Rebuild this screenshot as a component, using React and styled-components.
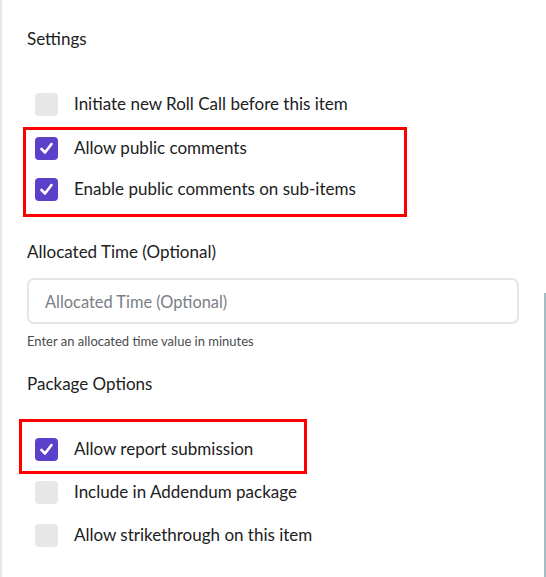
import React from "react";
import styled, { createGlobalStyle } from "styled-components";

const GlobalStyle = createGlobalStyle`
  html, body {
    margin: 0;
    padding: 0;
    background: #ffffff;
  }
  body {
    font-family: Lato, "Noto Sans", sans-serif;
    color: #202122;
  }
`;

const Check = ({ checked }) => (
  <Box checked={checked}>
    {checked && (
      <svg width="23" height="23" viewBox="0 0 23 23">
        <path
          d="M6.5 12 L10 15.5 L16.5 7"
          fill="none"
          stroke="#ffffff"
          strokeWidth="2.6"
          strokeLinecap="round"
          strokeLinejoin="round"
        />
      </svg>
    )}
  </Box>
);

const Option = ({ label, checked }) => (
  <Row>
    <Check checked={checked} />
    <Label>{label}</Label>
  </Row>
);

const App = () => {
  return (
    <>
      <GlobalStyle />
      <Panel>
        <Heading>Settings</Heading>
        <List>
          <Option label="Initiate new Roll Call before this item" />
          <Highlight top={6} bottom={13} left={9} width={384} gap={17} offset={-12}>
            <Option label="Allow public comments" checked />
            <Option label="Enable public comments on sub-items" checked />
          </Highlight>
        </List>

        <Heading spaced>Allocated Time (Optional)</Heading>
        <Input placeholder="Allocated Time (Optional)" />
        <Help>Enter an allocated time value in minutes</Help>

        <Heading spaced>Package Options</Heading>
        <List>
          <Highlight top={15} bottom={10} left={13} width={288} gap={0} offset={-16}>
            <Option label="Allow report submission" checked />
          </Highlight>
          <Option label="Include in Addendum package" />
          <Option label="Allow strikethrough on this item" />
        </List>
      </Panel>
      <ScrollEdge />
    </>
  );
};

export default App;

const Panel = styled.div`
  box-sizing: border-box;
  min-height: 577px;
  border-left: 2px solid #e8e8e8;
  padding: 29px 28px 0 25px;
  display: flex;
  flex-direction: column;
`;

const Heading = styled.div`
  font-size: 17px;
  line-height: 20px;
  color: #202122;
  margin-top: ${p => (p.spaced ? "25px" : "0")};
`;

const List = styled.div`
  display: flex;
  flex-direction: column;
  padding-left: 8px;

  & > div:first-child {
    margin-top: 43px;
  }
  & > div + div {
    margin-top: 19px;
  }
`;

const Highlight = styled.div`
  box-sizing: border-box;
  display: flex;
  flex-direction: column;
  gap: ${p => p.gap}px;
  width: ${p => p.width}px;
  margin-left: ${p => p.offset}px;
  padding: ${p => p.top}px 0 ${p => p.bottom}px ${p => p.left}px;
  border: 3px solid #ff0000;

  & + div {
    margin-top: 6px !important;
  }
  div + & {
    margin-top: 11px !important;
  }
  &:first-child {
    margin-top: 25px !important;
  }
`;

const Row = styled.div`
  display: flex;
  align-items: center;
  gap: 16px;
  height: 24px;
`;

const Box = styled.span`
  flex: none;
  width: 23px;
  height: 23px;
  border-radius: 4px;
  background: ${p => (p.checked ? "#5b41c9" : "#e6e7e9")};
  display: flex;
  align-items: center;
  justify-content: center;
`;

const Label = styled.span`
  font-size: 17px;
  line-height: 20px;
  color: #202122;
  white-space: nowrap;
`;

const Input = styled.input`
  box-sizing: border-box;
  margin-top: 16px;
  width: 492px;
  height: 46px;
  border: 2px solid #e3e5e8;
  border-radius: 7px;
  padding: 0 16px;
  font-family: Lato, "Noto Sans", sans-serif;
  font-size: 16.4px;
  color: #202122;
  outline: none;

  &::placeholder {
    color: #7a7e86;
  }
`;

const Help = styled.div`
  margin-top: 10px;
  font-size: 13px;
  line-height: 15px;
  color: #494c4e;
`;

const ScrollEdge = styled.div`
  position: absolute;
  left: 544px;
  top: 293px;
  width: 2px;
  height: 284px;
  background: #a5bdc4;
`;
